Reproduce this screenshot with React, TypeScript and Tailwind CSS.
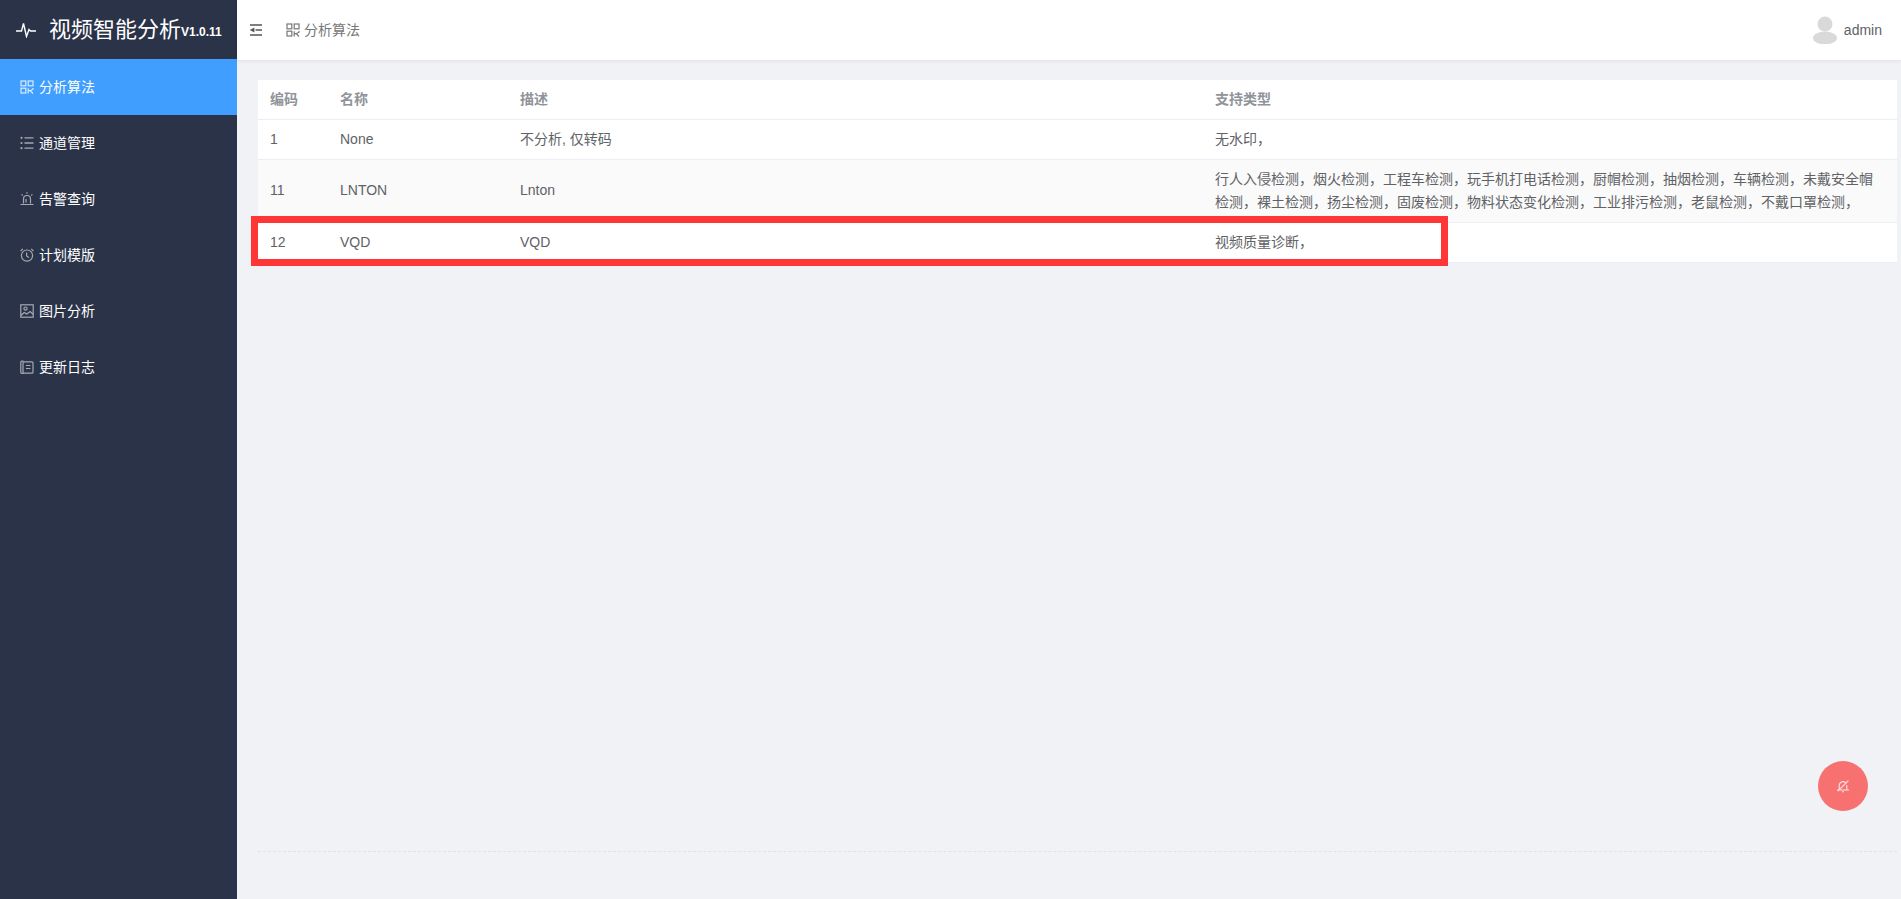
import React from "react";

const font = { fontFamily: '"Liberation Sans","Noto Sans CJK SC",Arial,sans-serif' };

const QrIcon = ({ className = "" }: { className?: string }) => (
  <svg viewBox="0 0 14 14" className={className} fill="none" stroke="currentColor" strokeWidth="1.2">
    <rect x="1" y="1" width="4.8" height="4.8" />
    <rect x="8.2" y="1" width="4.8" height="4.8" />
    <rect x="1" y="8.2" width="4.8" height="4.8" />
    <path d="M8.2 13.5V8.2M8.6 10.6h1.6L13 13.5M13 8v1.2L10.6 10.6" />
  </svg>
);
const ListIcon = () => (
  <svg viewBox="0 0 14 14" className="w-[14px] h-[14px]" fill="none" stroke="currentColor" strokeWidth="1.3">
    <circle cx="1.5" cy="1.8" r="1.1" fill="currentColor" stroke="none" />
    <circle cx="1.5" cy="7" r="1.1" fill="currentColor" stroke="none" />
    <circle cx="1.5" cy="12.2" r="1.1" fill="currentColor" stroke="none" />
    <path d="M4.5 1.8H13.5M4.5 7H13.5M4.5 12.2H13.5" />
  </svg>
);
const AlarmIcon = () => (
  <svg viewBox="0 0 14 14" className="w-[14px] h-[14px]" fill="none" stroke="currentColor" strokeWidth="1.2">
    <path d="M3.5 11.5V7a3.5 3.5 0 0 1 7 0v4.5M.5 12.5h13M7 .2v1.6M1.6 2.4l1.2 1.1M12.4 2.4l-1.2 1.1M6 7v3.5" />
  </svg>
);
const ClockIcon = () => (
  <svg viewBox="0 0 14 14" className="w-[14px] h-[14px]" fill="none" stroke="currentColor" strokeWidth="1.2">
    <circle cx="7" cy="7.6" r="5.6" />
    <path d="M6.6 4.4v3.6l2.4 1.6M.6 3 2.8.9M13.4 3 11.2.9" />
  </svg>
);
const PicIcon = () => (
  <svg viewBox="0 0 14 14" className="w-[14px] h-[14px]" fill="none" stroke="currentColor" strokeWidth="1.2">
    <rect x=".8" y=".8" width="12.4" height="12.4" />
    <circle cx="5.5" cy="4.6" r="1.6" />
    <path d="M.8 11.5l3.4-3 2.6 1.5L10 7.6l3.2 2.6" />
  </svg>
);
const BookIcon = () => (
  <svg viewBox="0 0 14 14" className="w-[14px] h-[14px]" fill="none" stroke="currentColor" strokeWidth="1.2">
    <path d="M3.6 1.2H1.8a1 1 0 0 0-1 1v10a1.2 1.2 0 0 0 1 1.2h1.8" />
    <rect x="3" y="1.8" width="10" height="11.4" rx="1" />
    <path d="M6 5.5h4.5M6 8.5h4.5" />
  </svg>
);

const menu = [
  { label: "分析算法", icon: <QrIcon className="w-[14px] h-[14px]" />, active: true },
  { label: "通道管理", icon: <ListIcon /> },
  { label: "告警查询", icon: <AlarmIcon /> },
  { label: "计划模版", icon: <ClockIcon /> },
  { label: "图片分析", icon: <PicIcon /> },
  { label: "更新日志", icon: <BookIcon /> },
];

const rows = [
  { code: "1", name: "None", desc: "不分析, 仅转码", type: "无水印，", h: "h-[40px]", bg: "bg-white" },
  {
    code: "11",
    name: "LNTON",
    desc: "Lnton",
    type: "行人入侵检测，烟火检测，工程车检测，玩手机打电话检测，厨帽检测，抽烟检测，车辆检测，未戴安全帽检测，裸土检测，扬尘检测，固废检测，物料状态变化检测，工业排污检测，老鼠检测，不戴口罩检测，",
    h: "h-[63px]",
    bg: "bg-[#fafafa]",
  },
  { code: "12", name: "VQD", desc: "VQD", type: "视频质量诊断，", h: "h-[40px]", bg: "bg-white" },
];

export default function App() {
  return (
    <div className="flex h-[899px] w-[1901px] overflow-hidden bg-[#f0f2f6]" style={font}>
      <aside className="w-[237px] shrink-0 bg-[#2b3349]">
        <div className="h-[59px] flex items-center text-white pl-[16px]">
          <svg viewBox="0 0 20 16" className="w-[20px] h-[16px] mr-[13px]" fill="none" stroke="currentColor" strokeWidth="1.4">
            <path d="M0 9h5.5l2-7.5 3 13 2.5-7 1.5 1.5H20" />
          </svg>
          <span className="text-[22px] leading-[30px]">视频智能分析</span>
          <span className="text-[12px] font-bold mt-[5px]">V1.0.11</span>
        </div>
        <nav>
          {menu.map((m) => (
            <div
              key={m.label}
              className={`h-[56px] flex items-center pl-[20px] text-[14px] text-white ${m.active ? "bg-[#409eff]" : ""}`}
            >
              <span className={`w-[19px] shrink-0 ${m.active ? "text-white/80" : "text-[#a5a9b3]"}`}>{m.icon}</span>
              {m.label}
            </div>
          ))}
        </nav>
      </aside>
      <div className="flex-1 min-w-0 flex flex-col relative">
        <header className="h-[60px] shrink-0 bg-white flex items-center shadow-[0_1px_4px_rgba(0,21,41,0.08)] pl-[12px] pr-[19px] text-[14px] text-[#606266]">
          <svg viewBox="0 0 14 14" className="w-[14px] h-[14px] text-[#555] mr-[23px]" fill="none" stroke="currentColor" strokeWidth="1.4">
            <path d="M1 2h12M6.5 7H13M1 12h12" />
            <path d="M.8 7l4.6-2.6v5.2z" fill="currentColor" stroke="none" />
          </svg>
          <QrIcon className="w-[14px] h-[14px] text-[#777] mr-[4px]" />
          <span className="text-[#777] text-[14px]">分析算法</span>
          <div className="ml-auto flex items-center gap-[7px]">
            <svg viewBox="0 0 24 28" className="w-[24px] h-[28px] text-[#d9d9d9]" fill="currentColor">
              <circle cx="12" cy="8" r="7.5" />
              <ellipse cx="12" cy="22" rx="12" ry="6.5" />
            </svg>
            <span>admin</span>
          </div>
        </header>
        <main className="flex-1 pl-[21px] pr-[4px] pt-[20px] flex flex-col">
          <table className="w-full table-fixed bg-white text-[14px] text-[#606266] border-collapse">
            <colgroup>
              <col className="w-[70px]" />
              <col className="w-[180px]" />
              <col className="w-[695px]" />
              <col />
            </colgroup>
            <thead>
              <tr className="h-[39px] border-b border-[#ebeef5] text-[#909399] text-left">
                <th className="font-bold px-[12px]">编码</th>
                <th className="font-bold px-[12px]">名称</th>
                <th className="font-bold px-[12px]">描述</th>
                <th className="font-bold px-[12px]">支持类型</th>
              </tr>
            </thead>
            <tbody>
              {rows.map((r) => (
                <tr key={r.code} className={`${r.h} ${r.bg} border-b border-[#ebeef5] leading-[23px]`}>
                  <td className="px-[12px]">{r.code}</td>
                  <td className="px-[12px]">{r.name}</td>
                  <td className="px-[12px]">{r.desc}</td>
                  <td className="px-[12px]">{r.type}</td>
                </tr>
              ))}
            </tbody>
          </table>
          <div className="mt-auto mb-[47px] border-t border-dashed border-[#dfe2e8]" />
        </main>
        <div className="absolute left-[14px] top-[216px] w-[1197px] h-[50px] border-[7px] border-[#ff3636]" />
        <div className="absolute left-[1581px] top-[761px] w-[50px] h-[50px] rounded-full bg-[#f87171] flex items-center justify-center text-white/80">
          <svg viewBox="0 0 14 14" className="w-[14px] h-[14px]" fill="none" stroke="currentColor" strokeWidth="1.1">
            <path d="M3.2 10.5V6.5a3.8 3.8 0 0 1 6.4-2.8M10.8 6v4.5M1 11h12M6 12.8h2M1.8 12.2 12.4 1.6" />
          </svg>
        </div>
      </div>
    </div>
  );
}
